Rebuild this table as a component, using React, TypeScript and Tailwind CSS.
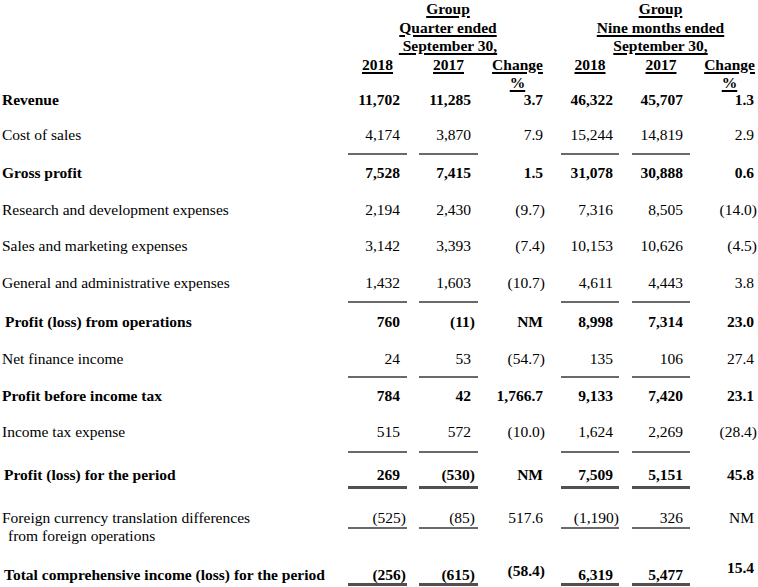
type Line = 'none' | 'single' | 'double';

type Row = {
  label: string[];
  values: string[];
  bold?: boolean;
  indent?: string;
  line?: Line;
  lineGap?: string;
  height: string;
  shift3?: string;
  shift6?: string;
};

const rows: Row[] = [
  { label: ['Revenue'], values: ['11,702', '11,285', '3.7', '46,322', '45,707', '1.3'], bold: true, height: 'h-[35px]' },
  { label: ['Cost of sales'], values: ['4,174', '3,870', '7.9', '15,244', '14,819', '2.9'], line: 'single', lineGap: 'mt-[9px]', height: 'h-[38px]' },
  { label: ['Gross profit'], values: ['7,528', '7,415', '1.5', '31,078', '30,888', '0.6'], bold: true, height: 'h-[37px]' },
  { label: ['Research and development expenses'], values: ['2,194', '2,430', '(9.7)', '7,316', '8,505', '(14.0)'], height: 'h-[36px]' },
  { label: ['Sales and marketing expenses'], values: ['3,142', '3,393', '(7.4)', '10,153', '10,626', '(4.5)'], height: 'h-[37px]' },
  { label: ['General and administrative expenses'], values: ['1,432', '1,603', '(10.7)', '4,611', '4,443', '3.8'], line: 'single', lineGap: 'mt-[9px]', height: 'h-[39px]' },
  { label: ['Profit (loss) from operations'], values: ['760', '(11)', 'NM', '8,998', '7,314', '23.0'], bold: true, indent: 'pl-[5px]', height: 'h-[37px]' },
  { label: ['Net finance income'], values: ['24', '53', '(54.7)', '135', '106', '27.4'], line: 'single', lineGap: 'mt-[8px]', height: 'h-[37px]' },
  { label: ['Profit before income tax'], values: ['784', '42', '1,766.7', '9,133', '7,420', '23.1'], bold: true, height: 'h-[36px]' },
  { label: ['Income tax expense'], values: ['515', '572', '(10.0)', '1,624', '2,269', '(28.4)'], line: 'single', lineGap: 'mt-[10px]', height: 'h-[43px]' },
  { label: ['Profit (loss) for the period'], values: ['269', '(530)', 'NM', '7,509', '5,151', '45.8'], bold: true, indent: 'pl-[4px]', line: 'double', lineGap: 'mt-[2px]', height: 'h-[43px]' },
  {
    label: ['Foreign currency translation differences', 'from foreign operations'],
    values: ['(525)', '(85)', '517.6', '(1,190)', '326', 'NM'],
    line: 'single',
    lineGap: 'mt-0',
    height: 'h-[57px]',
  },
  {
    label: ['Total comprehensive income (loss) for the period'],
    values: ['(256)', '(615)', '(58.4)', '6,319', '5,477', '15.4'],
    bold: true,
    indent: 'pl-[4px]',
    line: 'double',
    lineGap: '-mt-[1px]',
    height: 'h-[21px]',
    shift3: '-mt-[4px]',
    shift6: '-mt-[7px]',
  },
];

// per value column: where the underline sits and how far the figures stop short of its end
const cols = [
  { box: 'ml-[3px] w-[59px]', pad: 'pr-[7px]', padParen: 'pr-[1px]', lined: true },
  { box: 'ml-[9px] w-[59px]', pad: 'pr-[7px]', padParen: 'pr-[3px]', lined: true },
  { box: 'w-full', pad: 'pr-[12px]', padParen: 'pr-[10px]', lined: false },
  { box: 'ml-[6px] w-[58px]', pad: 'pr-[6px]', padParen: 'pr-0', lined: true },
  { box: 'ml-[7px] w-[58px]', pad: 'pr-[7px]', padParen: 'pr-[2px]', lined: true },
  { box: 'w-full', pad: 'pr-[4px]', padParen: 'pr-[1px]', lined: false },
];

const grid = 'grid grid-cols-[345px_65px_70px_75px_70px_70px_63px]';

function Heading({ children }: { children: React.ReactNode }) {
  return <span className="font-bold underline decoration-[1.5px] underline-offset-[2px]">{children}</span>;
}

function Header() {
  return (
    <div className="h-[91px]">
      <div className={`${grid} leading-[18.5px]`}>
        <div className="row-span-5" />
        <div className="col-span-3 pr-[4px] text-center"><Heading>Group</Heading></div>
        <div className="col-span-3 pl-[8px] text-center"><Heading>Group</Heading></div>
        <div className="col-span-3 pr-[4px] text-center"><Heading>Quarter ended</Heading></div>
        <div className="col-span-3 pl-[8px] text-center"><Heading>Nine months ended</Heading></div>
        <div className="col-span-3 pr-[4px] text-center whitespace-pre"><Heading>{'\u00a0September 30,'}</Heading></div>
        <div className="col-span-3 pl-[8px] text-center"><Heading>September 30,</Heading></div>

        <div className="ml-[3px] w-[59px] text-center"><Heading>2018</Heading></div>
        <div className="ml-[9px] w-[59px] text-center"><Heading>2017</Heading></div>
        <div className="text-center"><Heading>Change</Heading></div>
        <div className="ml-[6px] w-[58px] text-center"><Heading>2018</Heading></div>
        <div className="ml-[7px] w-[58px] text-center"><Heading>2017</Heading></div>
        <div className="flex justify-end pr-[3px]">
          <span className="inline-block text-center"><Heading>Change</Heading></span>
        </div>

        <div />
        <div />
        <div className="text-center"><Heading>%</Heading></div>
        <div />
        <div />
        <div className="flex justify-end pr-[3px]">
          <span className="inline-block w-[51px] text-center"><Heading>%</Heading></span>
        </div>
      </div>
    </div>
  );
}

function TableRow({ row }: { row: Row }) {
  return (
    <div className={`${grid} ${row.height} leading-[18px] ${row.bold ? 'font-bold' : ''}`}>
      <div className={row.indent ?? 'pl-[2px]'}>
        {row.label.map((l, i) => (
          <div key={l} className={i > 0 ? 'pl-[6px]' : ''}>{l}</div>
        ))}
      </div>
      {row.values.map((v, i) => {
        const c = cols[i];
        const paren = v.startsWith('(');
        const shift = i === 2 ? row.shift3 ?? '' : i === 5 ? row.shift6 ?? '' : '';
        return (
          <div key={i} className={`${c.box} ${shift} flex flex-col`}>
            <div className={`text-right ${paren ? c.padParen : c.pad}`}>{v}</div>
            {c.lined && row.line === 'single' && <div className={`${row.lineGap} h-[2px] bg-[#6a6a6a]`} />}
            {c.lined && row.line === 'double' && <div className={`${row.lineGap} h-[3px] bg-[#505050]`} />}
          </div>
        );
      })}
    </div>
  );
}

export default function App() {
  return (
    <div className="h-[587px] w-[758px] overflow-hidden bg-white font-['Liberation_Serif',serif] text-[15.5px] text-black">
      <Header />
      {rows.map((r) => (
        <TableRow key={r.label[0]} row={r} />
      ))}
    </div>
  );
}
